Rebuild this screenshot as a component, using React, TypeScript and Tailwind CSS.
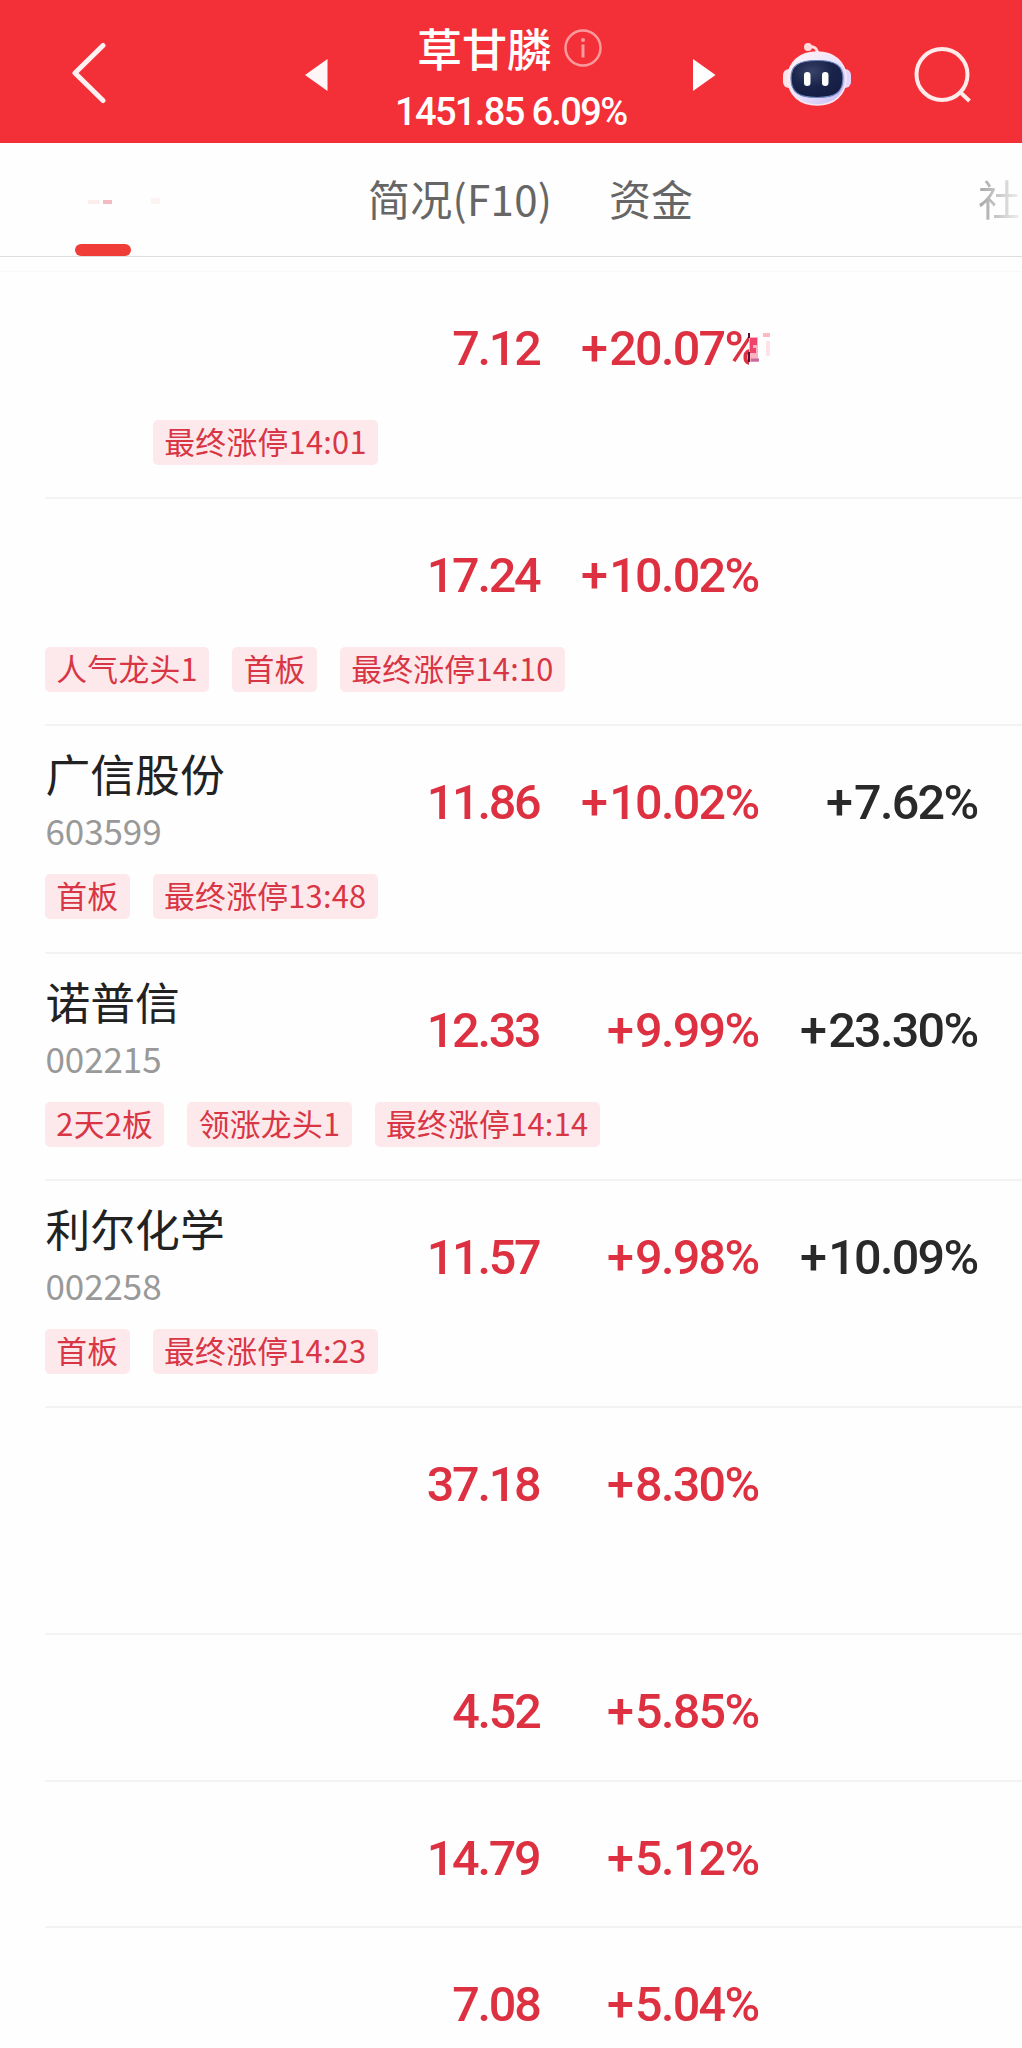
import React from 'react';

type Stock = {
  name?: string;
  code?: string;
  price: string;
  change: string;
  extra?: string;
  tags?: string[];
  tagIndent?: boolean;
  compact?: boolean;
  smudge?: boolean;
};

const stocks: Stock[] = [
  { price: '7.12', change: '20.07%', tags: ['最终涨停14:01'], tagIndent: true, smudge: true },
  { price: '17.24', change: '10.02%', tags: ['人气龙头1', '首板', '最终涨停14:10'] },
  { name: '广信股份', code: '603599', price: '11.86', change: '10.02%', extra: '7.62%', tags: ['首板', '最终涨停13:48'] },
  { name: '诺普信', code: '002215', price: '12.33', change: '9.99%', extra: '23.30%', tags: ['2天2板', '领涨龙头1', '最终涨停14:14'] },
  { name: '利尔化学', code: '002258', price: '11.57', change: '9.98%', extra: '10.09%', tags: ['首板', '最终涨停14:23'] },
  { price: '37.18', change: '8.30%' },
  { price: '4.52', change: '5.85%', compact: true },
  { price: '14.79', change: '5.12%', compact: true },
  { price: '7.08', change: '5.04%', compact: true }
];

const RobotIcon: React.FC = () => (
  <svg width="70" height="66" viewBox="0 0 70 66" className="shrink-0">
    <defs>
      <linearGradient id="shell" x1="0" y1="0" x2="1" y2="1">
        <stop offset="0" stopColor="#fff6f8" />
        <stop offset="0.5" stopColor="#ece4fb" />
        <stop offset="1" stopColor="#c3b8f6" />
      </linearGradient>
      <radialGradient id="face" cx="0.4" cy="0.3" r="0.8">
        <stop offset="0" stopColor="#39436a" />
        <stop offset="0.5" stopColor="#1a2349" />
        <stop offset="1" stopColor="#141c42" />
      </radialGradient>
    </defs>
    <path d="M27 6 Q35 4 36 14" fill="none" stroke="#ffdfe2" strokeWidth="3" />
    <circle cx="26" cy="6" r="4" fill="#ffd9dd" />
    <rect x="1" y="28" width="12" height="19" rx="6" fill="#fbe3ec" />
    <rect x="57" y="28" width="12" height="19" rx="6" fill="#e3d6fb" />
    <path d="M35 11C52 11 64 21 64 37C64 54 52 64 35 64C18 64 6 54 6 37C6 21 18 11 35 11Z" fill="url(#shell)" stroke="#ffe6ee" strokeWidth="1.5" />
    <path d="M35 19.500C54 19.500 61 25 61 37C61 51 54 56.500 35 56.500C16 56.500 9 51 9 37C9 25 16 19.500 35 19.500Z" fill="url(#face)" stroke="#6b83bd" strokeWidth="1.200" />
    <rect x="22" y="31" width="6.500" height="14" rx="3.200" fill="#fff" />
    <rect x="40" y="31" width="6.500" height="14" rx="3.200" fill="#fff" />
  </svg>
);

const Header: React.FC = () => (
  <header className="flex h-[143px] items-start bg-[#f32f38] text-white">
    <svg width="36" height="62" viewBox="0 0 36 62" className="ml-[71px] mt-[42px] shrink-0">
      <path d="M32 3.500 L4 31 L32 58.500" fill="none" stroke="#fff1f1" strokeWidth="5" strokeLinecap="round" strokeLinejoin="round" />
    </svg>
    <svg width="24" height="34" viewBox="0 0 24 34" className="ml-[197px] mt-[58px] shrink-0">
      <path d="M23.500 1 V33 L1 17 Z" fill="#fff7f7" />
    </svg>
    <div className="ml-[65px] flex w-[240px] shrink-0 flex-col">
      <div className="mt-[15px] flex h-[66px] items-center pl-[24px]">
        <span className="text-[45px] font-medium leading-[66px]">草甘膦</span>
        <svg width="38" height="38" viewBox="0 0 38 38" className="ml-[12px] shrink-0">
          <circle cx="19" cy="19" r="17.500" fill="none" stroke="#fb9a9d" strokeWidth="2.500" />
          <path d="M19 15.500 V28.500" stroke="#fb9a9d" strokeWidth="3" />
          <circle cx="19" cy="11" r="2" fill="#fb9a9d" />
        </svg>
      </div>
      <span className="ml-[2px] mt-[8px] whitespace-nowrap font-['Roboto',sans-serif] text-[38px] font-medium leading-[46px] tracking-[-1.650px]">
        1451.85 6.09%
      </span>
    </div>
    <svg width="24" height="34" viewBox="0 0 24 34" className="ml-[59px] mt-[58px] shrink-0">
      <path d="M1 1 V33 L23.500 17 Z" fill="#fff" />
    </svg>
    <div className="ml-[66px] mt-[41px]">
      <RobotIcon />
    </div>
    <svg width="58" height="58" viewBox="0 0 58 58" className="ml-[62px] mt-[46px] shrink-0">
      <circle cx="28" cy="28.500" r="25.500" fill="none" stroke="#ffebe9" strokeWidth="4" />
      <path d="M46 46 L55.500 55" stroke="#ffebe9" strokeWidth="4" />
    </svg>
  </header>
);

const Tabs: React.FC = () => (
  <nav className="flex h-[114px] border-b-[1.500px] border-[#dedede] text-[42px] leading-[62px] text-[#666]">
    <div className="flex w-[368px] shrink-0 flex-col pl-[75px]">
      <svg width="90" height="30" viewBox="0 0 90 30" className="mt-[44px]">
        <path d="M13 15 H25" stroke="#fdeeee" strokeWidth="4" />
        <path d="M28 15 H37" stroke="#f3bcc2" strokeWidth="4" />
        <path d="M76 14 H85" stroke="#fdf3f3" strokeWidth="6" />
      </svg>
      <div className="mt-[27px] h-3 w-14 rounded-full bg-[#f03d37]" />
    </div>
    <span className="mt-[24px] w-[241px] shrink-0 tracking-[0.300px]">简况(F10)</span>
    <span className="mt-[24px] w-[369px] shrink-0">资金</span>
    <span className="mt-[24px] w-[44px] shrink-0 overflow-hidden bg-gradient-to-r from-[#a5a5a5] to-[#f4f4f4] bg-clip-text text-transparent">社</span>
  </nav>
);

const Smudge: React.FC = () => (
  <svg width="44" height="44" viewBox="0 0 44 44" className="absolute left-[207px] top-[8px]">
    <rect x="2" y="0" width="12" height="40" fill="#fefefe" />
    <rect x="2" y="8" width="9" height="25" fill="#fbb3c4" />
    <path d="M3 9 H10 V16 H6 V19 H9 V24 H3 Z" fill="#f0446a" />
    <path d="M2 4 V9 M2 23 V33" stroke="#5b1030" strokeWidth="2" />
    <path d="M4 31 H12" stroke="#c56a9c" strokeWidth="3" />
    <path d="M16 6 H23" stroke="#fcb9c0" strokeWidth="4" />
    <path d="M21 12 V27" stroke="#fde3e8" strokeWidth="4" />
  </svg>
);

const Percent: React.FC<{ value: string }> = ({ value }) => (
  <>
    <span className="mr-[3px]">+</span>
    {value}
  </>
);

const StockRow: React.FC<{ stock: Stock }> = ({ stock }) => (
  <li className={stock.compact ? 'ml-[45px] h-[146.500px] border-b-2 border-[#f3f3f3]' : 'ml-[45px] h-[227.200px] border-b-2 border-[#f3f3f3]'}>
    <div className="flex h-[148px]">
      <div className="w-[275px] shrink-0 pl-[0.500px] pt-[14px]">
        <p className="h-[66px] text-[44.800px] leading-[66px] text-[#222]">{stock.name}</p>
        <p className="mt-[-1px] text-[35px] leading-[50px] tracking-[-0.100px] text-[#999]">{stock.code}</p>
      </div>
      <div className="mt-[49px] flex h-[56px] font-['Roboto',sans-serif] text-[48.500px] font-medium leading-[56px] tracking-[-1.700px] text-[#dd3040]">
        <span className="w-[219.500px] shrink-0 text-right tracking-[-2.200px]">{stock.price}</span>
        <span className="relative w-[219px] shrink-0 text-right">
          <Percent value={stock.change} />
          {stock.smudge && <Smudge />}
        </span>
        <span className="w-[219px] shrink-0 text-right text-[#292929]">
          {stock.extra && <Percent value={stock.extra} />}
        </span>
      </div>
    </div>
    {stock.tags && (
      <div className={stock.tagIndent ? 'flex gap-[23px] pl-[108px]' : 'flex gap-[23px]'}>
        {stock.tags.map((tag) => (
          <span key={tag} className="h-[45px] rounded-[5px] bg-[#fde9eb] px-[11.300px] text-[30.800px] leading-[41px] tracking-[0.260px] text-[#d93645]">
            {tag}
          </span>
        ))}
      </div>
    )}
  </li>
);

const App: React.FC = () => {
  return (
    <div className="h-[2048px] w-[1022px] overflow-hidden bg-[#fefefe] font-['Noto_Sans_CJK_SC',sans-serif]">
      <Header />
      <Tabs />
      <ul className="mt-[14px] border-t border-[#f8f8f8]">
        {stocks.map((stock) => (
          <StockRow key={stock.price} stock={stock} />
        ))}
      </ul>
    </div>
  );
};

export default App;
